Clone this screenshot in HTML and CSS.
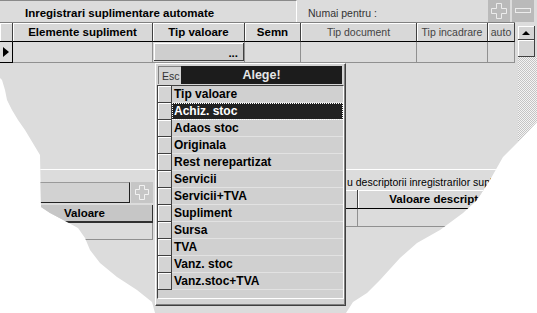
FILE: index.html
```html
<!DOCTYPE html>
<html lang="ro">
<head>
    <meta charset="UTF-8">
    <title>Inregistrari suplimentare automate</title>
    <link rel="stylesheet" href="styles.css">
</head>
<body>
    <div class="window">
        <div class="topbar">
            <div class="title">Inregistrari suplimentare automate</div>
            <div class="filter">Numai pentru :</div>
            <div class="tools">
                <button class="tool" aria-label="Adauga">
                    <svg width="22" height="22" viewBox="0 0 22 22"><path d="M8.5 3.5h5v5h5v5h-5v5h-5v-5h-5v-5h5z" fill="none" stroke="#ececec"/></svg>
                </button>
                <button class="tool" aria-label="Sterge">
                    <svg width="22" height="22" viewBox="0 0 22 22"><rect x="3.5" y="8.5" width="15" height="4" fill="none" stroke="#ececec"/></svg>
                </button>
            </div>
        </div>

        <div class="main">
            <div class="grid">
                <div class="hcell"></div>
                <div class="hcell">Elemente supliment</div>
                <div class="hcell">Tip valoare</div>
                <div class="hcell">Semn</div>
                <div class="hcell light">Tip document</div>
                <div class="hcell light">Tip incadrare</div>
                <div class="hcell light">auto</div>

                <div class="cell indicator"><span class="arrow"></span></div>
                <div class="cell"></div>
                <div class="cell pick"><div class="dots">...</div></div>
                <div class="cell"></div>
                <div class="cell"></div>
                <div class="cell"></div>
                <div class="cell"></div>
            </div>
            <div class="scrollbar">
                <div class="sb-btn"><span class="up"></span></div>
                <div class="sb-thumb"></div>
                <div class="sb-track"></div>
            </div>
        </div>

        <div class="lower">
            <div class="lower-left">
                <div class="search">
                    <div class="search-box"></div>
                    <button class="add" aria-label="Adauga">
                        <svg width="22" height="21" viewBox="0 0 22 21"><path d="M8.5 3.5h5v4h4v5h-4v5h-5v-5h-4v-5h4z" fill="none" stroke="#f2f2f2"/></svg>
                    </button>
                </div>
                <div class="vhead">Valoare</div>
                <div class="vrow"></div>
            </div>
            <div class="lower-right">
                <div class="caption">u descriptorii inregistrarilor suplimentare</div>
                <div class="dgrid">
                    <div class="hcell"></div>
                    <div class="hcell">Valoare descriptor</div>
                    <div class="cell"></div>
                    <div class="cell"></div>
                </div>
            </div>
        </div>

        <div class="popup">
            <div class="popup-head">
                <div class="esc">Esc</div>
                <div class="alege">Alege!</div>
            </div>
            <div class="list">
                <div class="row"><span class="rbtn"></span><span class="label">Tip valoare</span></div>
                <div class="row selected"><span class="rbtn"></span><span class="label">Achiz. stoc</span></div>
                <div class="row"><span class="rbtn"></span><span class="label">Adaos stoc</span></div>
                <div class="row"><span class="rbtn"></span><span class="label">Originala</span></div>
                <div class="row"><span class="rbtn"></span><span class="label">Rest nerepartizat</span></div>
                <div class="row"><span class="rbtn"></span><span class="label">Servicii</span></div>
                <div class="row"><span class="rbtn"></span><span class="label">Servicii+TVA</span></div>
                <div class="row"><span class="rbtn"></span><span class="label">Supliment</span></div>
                <div class="row"><span class="rbtn"></span><span class="label">Sursa</span></div>
                <div class="row"><span class="rbtn"></span><span class="label">TVA</span></div>
                <div class="row"><span class="rbtn"></span><span class="label">Vanz. stoc</span></div>
                <div class="row"><span class="rbtn"></span><span class="label">Vanz.stoc+TVA</span></div>
            </div>
        </div>
    </div>
</body>
</html>
```

FILE: styles.css
```css
* {
    box-sizing: border-box;
}

body {
    margin: 0;
    background: #fff;
    font-family: "Liberation Sans", Arial, sans-serif;
    font-size: 11.5px;
    color: #000;
}

/* torn screenshot edge */
.window {
    position: relative;
    width: 537px;
    height: 313px;
    background: #dcdcdc;
    overflow: hidden;
    clip-path: polygon(0 0, 537px 0, 537px 122px, 520px 140px, 503px 157px, 490px 180px, 477px 200px, 463px 213px,
        440px 230px, 417px 243px, 400px 258px, 380px 280px, 367px 293px, 353px 302px, 346px 313px, 155px 313px,
        152px 302px, 137px 290px, 117px 277px, 100px 263px, 90px 250px, 85px 238px, 78px 228px, 67px 222px,
        50px 213px, 41px 207px, 40px 155px, 37px 150px, 31px 140px, 25px 130px, 18px 120px, 12px 110px,
        7px 100px, 5px 90px, 2px 80px, 0 78px);
}

.topbar {
    display: flex;
    height: 22px;
}

.title {
    width: 297px;
    border-top: 1px solid #8a8a8a;
    border-right: 1px solid #fff;
    padding: 5px 0 0 25px;
    line-height: 14px;
    font-weight: bold;
}

.filter {
    flex: 1;
    padding: 6px 0 0 11px;
    line-height: 14px;
    font-size: 10.5px;
    color: #333;
}

.tools {
    display: flex;
    gap: 2px;
    margin-right: 3px;
}

.tool {
    width: 22px;
    height: 22px;
    padding: 0;
    border: none;
    background: #bababa;
    display: flex;
}

.main {
    display: flex;
    height: 147px;
}

.grid {
    width: 515px;
    align-self: flex-start;
    display: grid;
    grid-template-columns: 13px 140px 92px 56px 116px 71px 27px;
    grid-template-rows: 19px 21px;
    border-top: 1px solid #808080;
}

.hcell {
    display: flex;
    align-items: center;
    justify-content: center;
    background: #d8d8d8;
    border-right: 1px solid #404040;
    border-bottom: 1px solid #000;
    box-shadow: inset 1px 1px 0 #fff;
    font-weight: bold;
    white-space: nowrap;
    overflow: hidden;
}

.hcell.light {
    font-weight: normal;
    font-size: 10.5px;
    color: #444;
}

.cell {
    border-right: 1px solid #909090;
    border-bottom: 1px solid #909090;
}

.cell.indicator {
    border-right-color: #000;
    border-bottom-color: #000;
    display: flex;
    align-items: center;
    padding-left: 3px;
}

.arrow {
    width: 0;
    height: 0;
    border-top: 5px solid transparent;
    border-bottom: 5px solid transparent;
    border-left: 6px solid #000;
}

.cell.pick {
    padding: 1px 0 1px 1px;
}

.dots {
    height: 100%;
    background: #cecece;
    border-right: 1px solid #404040;
    border-bottom: 1px solid #404040;
    box-shadow: inset 1px 1px 0 #fff;
    display: flex;
    align-items: flex-end;
    justify-content: flex-end;
    padding: 0 5px 1px 0;
    font-weight: bold;
    line-height: 12px;
}

.scrollbar {
    width: 19px;
    margin: 4px 0 0 3px;
    display: flex;
    flex-direction: column;
}

.sb-btn,
.sb-thumb {
    width: 17px;
    background: #d4d4d4;
    border-right: 1px solid #404040;
    border-bottom: 1px solid #404040;
    box-shadow: inset 1px 1px 0 #fff;
}

.sb-btn {
    height: 14px;
    display: flex;
    align-items: center;
    justify-content: center;
}

.up {
    width: 0;
    height: 0;
    border-left: 4px solid transparent;
    border-right: 4px solid transparent;
    border-bottom: 4px solid #000;
}

.sb-thumb {
    height: 17px;
}

.sb-track {
    flex: 1;
    background: repeating-conic-gradient(#c4c4c4 0 25%, #f4f4f4 0 50%) 0 0 / 2px 2px;
}

.lower {
    display: flex;
    height: 144px;
    border-top: 1px solid #fff;
}

.lower-left {
    width: 153px;
    padding: 12px 0 0 17px;
}

.search {
    display: flex;
    height: 21px;
    gap: 1px;
}

.search-box {
    flex: 1;
    background: #d2d2d2;
    border-top: 1px solid #9a9a9a;
    border-right: 1px solid #202020;
    border-bottom: 1px solid #202020;
}

.add {
    width: 22px;
    padding: 0;
    border: none;
    background: #c6c6c6;
    display: flex;
}

.vhead {
    margin-top: 2px;
    height: 18px;
    display: flex;
    align-items: center;
    justify-content: center;
    background: #c6c6c6;
    border-right: 1px solid #303030;
    border-bottom: 2px solid #303030;
    font-weight: bold;
}

.vrow {
    height: 17px;
    border-right: 1px solid #909090;
    border-bottom: 1px solid #909090;
}

.lower-right {
    flex: 1;
    padding-top: 6px;
}

.caption {
    padding-left: 194px;
    line-height: 12px;
    font-size: 10.5px;
    white-space: nowrap;
}

.dgrid {
    margin: 2px 0 0 17px;
    display: grid;
    grid-template-columns: 188px 164px;
    grid-template-rows: 19px 18px;
}

/* Tip valoare dropdown */
.popup {
    position: absolute;
    left: 155px;
    top: 63px;
    width: 191px;
    height: 243px;
    background: #d4d4d4;
    border: 1px solid;
    border-color: #fff #404040 #404040 #fff;
    box-shadow: inset -1px -1px 0 #808080;
    padding: 2px 1px 0 1px;
}

.popup-head {
    display: flex;
    height: 18px;
    margin: 0 2px 1px 1px;
}

.esc {
    width: 23px;
    border-top: 1px solid #808080;
    border-left: 1px solid #808080;
    display: flex;
    align-items: center;
    padding-left: 3px;
    font-size: 10.5px;
    color: #333;
}

.alege {
    flex: 1;
    background: #1c1c1c;
    color: #e6e6e6;
    font-weight: bold;
    display: flex;
    align-items: center;
    justify-content: center;
    font-size: 12.5px;
}

.list {
    height: 214px;
    border: 1px solid;
    border-color: #404040 #fff #fff #404040;
    background: #d0d0d0;
}

.row {
    display: flex;
    height: 17px;
}

.rbtn {
    width: 14px;
    background: #d4d4d4;
    border-right: 1px solid #404040;
    border-bottom: 1px solid #404040;
    box-shadow: inset 1px 1px 0 #fff;
}

.label {
    flex: 1;
    padding-left: 2px;
    border-bottom: 1px solid #e2e2e2;
    font-size: 12px;
    font-weight: bold;
    line-height: 16px;
    white-space: nowrap;
}

.row.selected .label {
    background: #222;
    color: #fff;
    outline: 1px dotted #fff;
    outline-offset: -1px;
}
```
